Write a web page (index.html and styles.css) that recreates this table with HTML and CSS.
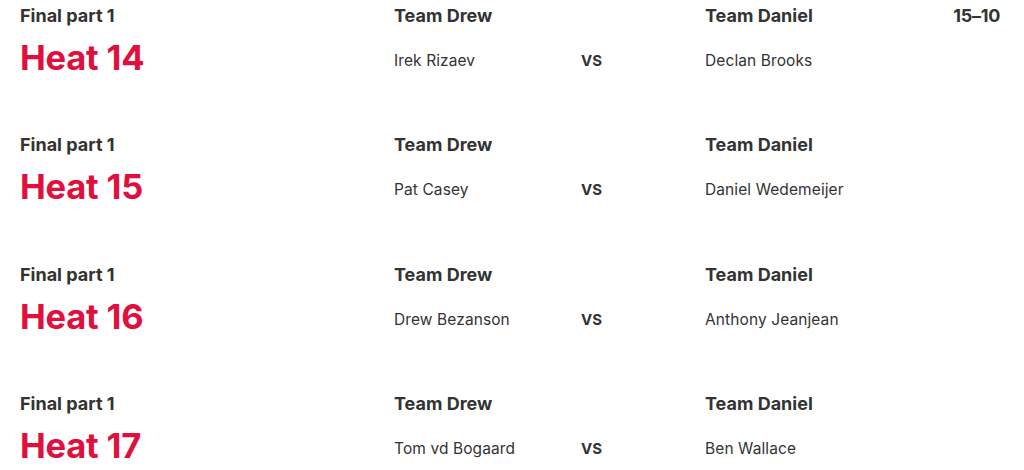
FILE: index.html
```
<!DOCTYPE html>
<html>
<head>
<meta charset="utf-8">
<link rel="stylesheet" href="styles.css">
</head>
<body>
<div class="list">
  <div class="heat">
    <div class="label">Final part 1</div>
    <div class="team">Team Drew</div>
    <div class="spacer"></div>
    <div class="team">Team Daniel</div>
    <div class="score">15–10</div>
    <div class="title">Heat 14</div>
    <div class="name">Irek Rizaev</div>
    <div class="vs">VS</div>
    <div class="name">Declan Brooks</div>
    <div></div>
  </div>
  <div class="heat">
    <div class="label">Final part 1</div>
    <div class="team">Team Drew</div>
    <div class="spacer"></div>
    <div class="team">Team Daniel</div>
    <div class="score"></div>
    <div class="title">Heat 15</div>
    <div class="name">Pat Casey</div>
    <div class="vs">VS</div>
    <div class="name">Daniel Wedemeijer</div>
    <div></div>
  </div>
  <div class="heat">
    <div class="label">Final part 1</div>
    <div class="team">Team Drew</div>
    <div class="spacer"></div>
    <div class="team">Team Daniel</div>
    <div class="score"></div>
    <div class="title">Heat 16</div>
    <div class="name">Drew Bezanson</div>
    <div class="vs">VS</div>
    <div class="name">Anthony Jeanjean</div>
    <div></div>
  </div>
  <div class="heat">
    <div class="label">Final part 1</div>
    <div class="team">Team Drew</div>
    <div class="spacer"></div>
    <div class="team">Team Daniel</div>
    <div class="score"></div>
    <div class="title">Heat 17</div>
    <div class="name">Tom vd Bogaard</div>
    <div class="vs">VS</div>
    <div class="name">Ben Wallace</div>
    <div></div>
  </div>
</div>
</body>
</html>
```
FILE: styles.css
```
html, body {
  margin: 0;
  padding: 0;
  background: #fff;
}
body {
  font-family: Inter, "Noto Sans", sans-serif;
  color: #333;
}
.list {
  display: flex;
  flex-direction: column;
  padding: 0 24px 0 20px;
}
.heat {
  display: grid;
  grid-template-columns: 374px 187px 124px 1fr auto;
  grid-template-rows: 30px 54px;
  align-items: center;
  height: 129.5px;
  box-sizing: border-box;
}
.label, .team, .score {
  font-size: 18px;
  font-weight: 700;
  color: #333;
}
.score {
  letter-spacing: -0.3px;
}
.title {
  font-size: 34.5px;
  font-weight: 700;
  color: #e0103e;
  letter-spacing: -0.2px;
}
.name {
  font-size: 15.5px;
  font-weight: 400;
  color: #333;
  padding-top: 6px;
  letter-spacing: 0.1px;
}
.vs {
  font-size: 15px;
  font-weight: 700;
  padding-top: 6px;
}
```
